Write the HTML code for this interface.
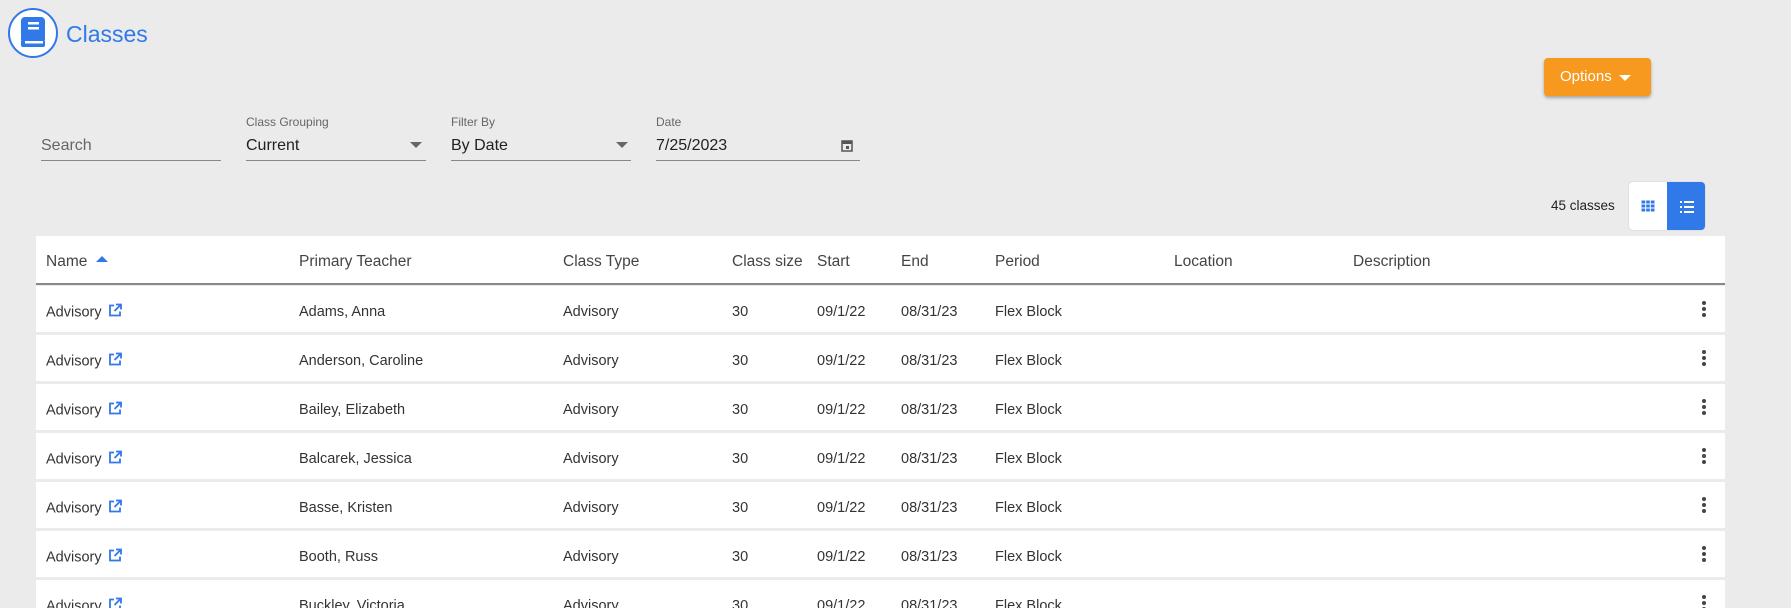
<!DOCTYPE html>
<html style="width:1791px;height:608px;overflow:hidden"><head><meta charset="utf-8"><style>
*{box-sizing:border-box;margin:0;padding:0}
body{width:1791px;height:608px;overflow:hidden;background:#ebebeb;font-family:"Liberation Sans",sans-serif;color:#333;position:relative}
.abs{position:absolute}
.lbl{position:absolute;font-size:12px;color:#666}
.val{position:absolute;font-size:16px;color:#222}
.line{position:absolute;height:1px;background:#888}
.tri{position:absolute;width:0;height:0;border-left:6px solid transparent;border-right:6px solid transparent;border-top:6px solid #666}
.table{position:absolute;left:36px;top:236px;width:1689px;height:372px;background:#ebebeb;overflow:hidden}
.hdr{position:absolute;left:0;top:0;width:1689px;height:49px;background:#fff;border-bottom:2px solid #888}
.row{position:absolute;left:0;width:1689px;height:46px;background:#fff}
.c{position:absolute;font-size:14.5px;color:#333;top:calc(50% + 3px);transform:translateY(-50%);white-space:nowrap}
.h{font-size:15.5px;color:#444;top:calc(50% + 2px)}
.kb{position:absolute;left:1666px;top:50%;transform:translateY(-50%);width:4px}
.kb i{display:block;width:4px;height:4px;border-radius:2px;background:#444;margin:2px 0}
</style></head><body>
<div class="abs" style="left:8px;top:8px;width:50px;height:50px;border:2px solid #3178e8;border-radius:50%;background:#fff"></div>
<svg class="abs" style="left:19px;top:16px" width="28" height="32" viewBox="0 0 28 32"><rect x="2" y="1" width="24" height="26" rx="4" fill="#3178e8"/><rect x="2" y="24" width="24" height="7" rx="2" fill="#3178e8"/><rect x="6" y="25" width="18" height="2.5" fill="#fff"/><rect x="9" y="6" width="11" height="2.5" fill="#fff"/><rect x="9" y="11" width="11" height="2.5" fill="#fff"/></svg>
<div class="abs" style="left:66px;top:21px;font-size:23px;color:#3178e8">Classes</div>

<div class="abs" style="left:1544px;top:58px;width:107px;height:38px;background:#f7981f;border-radius:4px;box-shadow:0 2px 3px rgba(0,0,0,.3);color:#fff;font-size:15px;line-height:38px;padding-left:16px">Options</div>
<div class="abs" style="left:1619px;top:75px;border-left:6px solid transparent;border-right:6px solid transparent;border-top:6px solid #fff;width:0;height:0"></div>

<div class="val" style="left:41px;top:137px;color:#666">Search</div><div class="line" style="left:41px;top:160px;width:180px"></div>
<div class="lbl" style="left:246px;top:115px">Class Grouping</div><div class="val" style="left:246px;top:137px">Current</div><div class="tri" style="left:410px;top:142px"></div><div class="line" style="left:246px;top:160px;width:180px"></div>
<div class="lbl" style="left:451px;top:115px">Filter By</div><div class="val" style="left:451px;top:137px">By Date</div><div class="tri" style="left:616px;top:142px"></div><div class="line" style="left:451px;top:160px;width:180px"></div>
<div class="lbl" style="left:656px;top:115px">Date</div><div class="val" style="left:656px;top:137px">7/25/2023</div>
<svg class="abs" style="left:841px;top:139px" width="12" height="13" viewBox="0 0 12 13"><rect x="1" y="2" width="10" height="10" fill="none" stroke="#555" stroke-width="1.5"/><rect x="1" y="2" width="10" height="3" fill="#555"/><rect x="5" y="7" width="3" height="3" fill="#555"/></svg>
<div class="line" style="left:656px;top:160px;width:204px"></div>

<div class="abs" style="left:1551px;top:198px;font-size:13.5px;color:#222">45 classes</div>
<div class="abs" style="left:1629px;top:182px;width:76px;height:48px;border-radius:4px;background:#fff;overflow:hidden;box-shadow:0 0 1px rgba(0,0,0,.3)"><div style="position:absolute;left:38px;top:0;width:38px;height:48px;background:#3178e8"></div></div>
<svg class="abs" style="left:1641px;top:200px" width="14" height="12" viewBox="0 0 14 12"><rect x="0.5" y="0.5" width="13" height="11" fill="#3178e8"/><path d="M4.7 0v12M9.3 0v12M0 4h14M0 8h14" stroke="#fff" stroke-width="1"/></svg>
<svg class="abs" style="left:1680px;top:201px" width="14" height="12" viewBox="0 0 14 12"><rect x="0" y="0" width="2" height="2" fill="#fff"/><rect x="0" y="5" width="2" height="2" fill="#fff"/><rect x="0" y="10" width="2" height="2" fill="#fff"/><rect x="4" y="0" width="10" height="2" fill="#fff"/><rect x="4" y="5" width="10" height="2" fill="#fff"/><rect x="4" y="10" width="10" height="2" fill="#fff"/></svg>

<div class="table">
<div class="hdr">
<div class="c h" style="left:10px">Name</div>
<div class="abs" style="left:60px;top:20px;border-left:6px solid transparent;border-right:6px solid transparent;border-bottom:6px solid #3178e8;width:0;height:0"></div>
<div class="c h" style="left:263px">Primary Teacher</div>
<div class="c h" style="left:527px">Class Type</div>
<div class="c h" style="left:696px">Class size</div>
<div class="c h" style="left:781px">Start</div>
<div class="c h" style="left:865px">End</div>
<div class="c h" style="left:959px">Period</div>
<div class="c h" style="left:1138px">Location</div>
<div class="c h" style="left:1317px">Description</div>
</div>
</div>
<script>
var t=["Adams, Anna","Anderson, Caroline","Bailey, Elizabeth","Balcarek, Jessica","Basse, Kristen","Booth, Russ","Buckley, Victoria"];
var tb=document.querySelector('.table'),h='';
for(var i=0;i<t.length;i++){h+='<div class="row" style="top:'+(50+i*49)+'px"><div class="c" style="left:10px">Advisory <svg width="14" height="14" viewBox="0 0 14 14" style="vertical-align:-1px;margin-left:2px"><path d="M6 2H2v10h10V8" fill="none" stroke="#3178e8" stroke-width="1.8"/><path d="M8 1h5v5M13 1L6.5 7.5" fill="none" stroke="#3178e8" stroke-width="1.8"/></svg></div><div class="c" style="left:263px">'+t[i]+'</div><div class="c" style="left:527px">Advisory</div><div class="c" style="left:696px">30</div><div class="c" style="left:781px">09/1/22</div><div class="c" style="left:865px">08/31/23</div><div class="c" style="left:959px">Flex Block</div><div class="kb"><i></i><i></i><i></i></div></div>';}
tb.insertAdjacentHTML('beforeend',h);
</script>
</body></html>
